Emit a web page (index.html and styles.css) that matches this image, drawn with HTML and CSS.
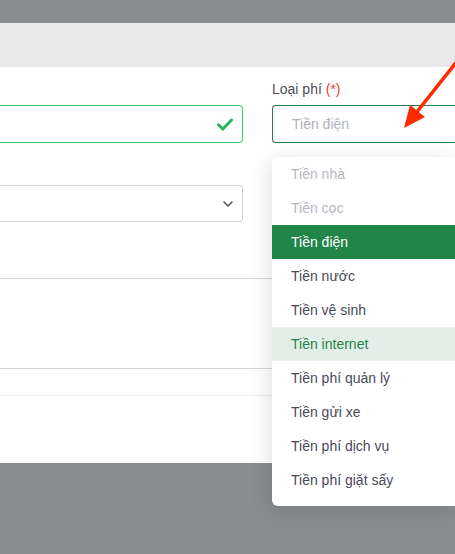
FILE: index.html
```html
<!DOCTYPE html>
<html lang="vi">
<head>
<meta charset="utf-8">
<title>Loại phí</title>
<link rel="stylesheet" href="styles.css">
</head>
<body>
<div class="modal">
  <div class="modal-header"></div>
  <div class="modal-body">
    <div class="grid">
      <div class="col-left">
        <div class="label-spacer"></div>
        <div class="input valid">
          <svg class="check" width="16" height="13" viewBox="0 0 16 13"><path d="M1.5 6.8 L5.8 11 L14.5 2" fill="none" stroke="#27b35b" stroke-width="3" stroke-linecap="round" stroke-linejoin="round"/></svg>
        </div>
        <div class="select">
          <svg class="chev" width="10" height="6" viewBox="0 0 10 6"><path d="M1 1 L5 5 L9 1" fill="none" stroke="#555566" stroke-width="1.6" stroke-linecap="round" stroke-linejoin="round"/></svg>
        </div>
      </div>
      <div class="col-right">
        <label class="label">Loại phí <span class="req">(*)</span></label>
        <div class="input focus"><span class="placeholder">Tiền điện</span></div>
        <ul class="dropdown">
          <li class="item disabled">Tiền nhà</li>
          <li class="item disabled">Tiền cọc</li>
          <li class="item selected">Tiền điện</li>
          <li class="item">Tiền nước</li>
          <li class="item">Tiền vệ sinh</li>
          <li class="item hover">Tiền internet</li>
          <li class="item">Tiền phí quản lý</li>
          <li class="item">Tiền gửi xe</li>
          <li class="item">Tiền phí dịch vụ</li>
          <li class="item">Tiền phí giặt sấy</li>
        </ul>
      </div>
    </div>
    <div class="section s1"></div>
    <div class="section s2"></div>
    <div class="section s3"></div>
  </div>
</div>
<svg class="annot" width="455" height="554" viewBox="0 0 455 554">
  <line x1="474" y1="40" x2="416" y2="113" stroke="#ff2a00" stroke-width="3.5"/>
  <polygon points="404,128 410,105 425,117" fill="#ff2a00"/>
</svg>
</body>
</html>
```

FILE: styles.css
```css
html, body {
  margin: 0;
  padding: 0;
}
body {
  width: 455px;
  height: 554px;
  overflow: hidden;
  background: #8a8d90;
  font-family: "Liberation Sans", Arial, sans-serif;
  font-size: 14px;
  color: #4a4a59;
  position: relative;
}
.modal {
  margin-top: 23px;
  height: 440px;
  background: #ffffff;
}
.modal-header {
  height: 44px;
  background: #e9e9e9;
}
.modal-body {
  display: flex;
  flex-direction: column;
}
.grid {
  display: flex;
  gap: 29px;
  padding-top: 13px;
}
.col-left {
  flex: 0 0 243px;
  display: flex;
  flex-direction: column;
}
.label-spacer {
  height: 25px;
}
.col-right {
  flex: 0 0 183px;
  position: relative;
  display: flex;
  flex-direction: column;
}
.label {
  display: block;
  height: 18px;
  line-height: 18px;
  margin-bottom: 7px;
  color: #4d4d5c;
}
.req {
  color: #ef3b3b;
}
.input {
  box-sizing: border-box;
  height: 38px;
  display: flex;
  align-items: center;
  background: #fff;
}
.input.valid {
  border: 1px solid #3ec46d;
  border-left: none;
  border-radius: 0 4px 4px 0;
  justify-content: flex-end;
  padding-right: 9px;
}
.input.focus {
  border: 1px solid #1f7d45;
  border-right: none;
  border-radius: 4px 0 0 4px;
  padding-left: 19px;
}
.placeholder {
  color: #b3b3bd;
}
.check {
  display: block;
}
.select {
  box-sizing: border-box;
  margin-top: 42px;
  height: 37px;
  border: 1px solid #d3d3db;
  border-left: none;
  border-radius: 0 4px 4px 0;
  display: flex;
  align-items: center;
  justify-content: flex-end;
  padding-right: 9px;
}
.chev {
  display: block;
}
.section.s1 {
  margin-top: 56px;
  height: 89px;
  border-top: 1px solid #d6d6de;
}
.section.s2 {
  height: 26px;
  border-top: 1px solid #d6d6de;
}
.section.s3 {
  border-top: 1px solid #ededf0;
}
.dropdown {
  position: absolute;
  left: 0;
  top: 77px;
  width: 183px;
  margin: 0;
  padding: 0 0 9px 0;
  list-style: none;
  background: #fff;
  border-radius: 6px 0 0 6px;
  box-shadow: -2px 4px 22px rgba(0, 0, 0, 0.13);
  z-index: 2;
}
.item {
  height: 34px;
  line-height: 34px;
  padding-left: 19px;
  color: #4a4a59;
}
.item.disabled {
  color: #b7b7c1;
}
.item.selected {
  background: #218449;
  color: #ffffff;
}
.item.hover {
  background: #e4eee8;
  color: #1e8449;
}
.annot {
  position: absolute;
  left: 0;
  top: 0;
  pointer-events: none;
  z-index: 5;
}
```
